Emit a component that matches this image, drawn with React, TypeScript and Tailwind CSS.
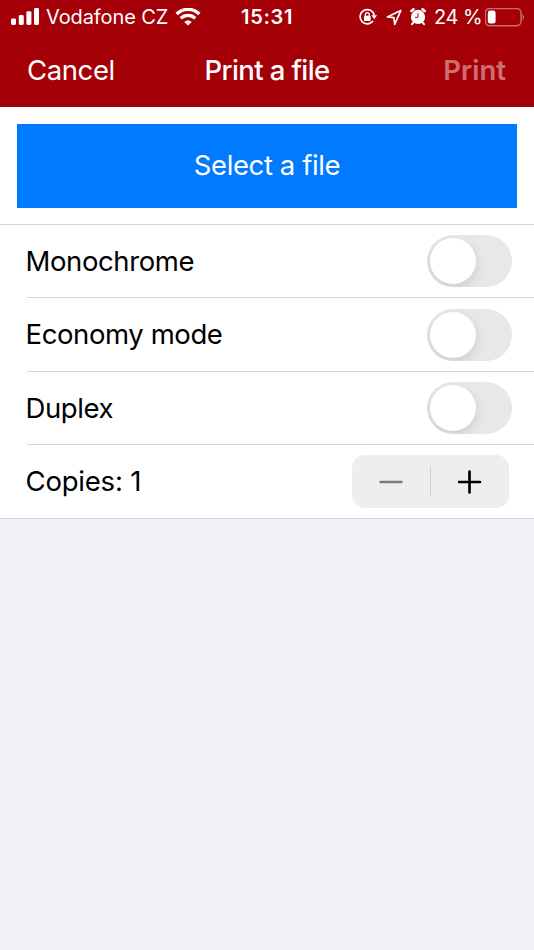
import React, { useState } from 'react';

const options = ['Monochrome', 'Economy mode', 'Duplex'];

function SignalIcon() {
    return (
        <svg width="28" height="18" viewBox="0 0 28 18" fill="white">
            <rect x="0" y="10.4" width="5" height="6.5" rx="1.4" />
            <rect x="7.8" y="7" width="5" height="9.9" rx="1.4" />
            <rect x="15.4" y="3.2" width="5" height="13.7" rx="1.4" />
            <rect x="23" y="0" width="5" height="16.9" rx="1.4" />
        </svg>
    );
}

function WifiIcon() {
    return (
        <svg width="26" height="18" viewBox="0 0 26 18" fill="none" stroke="white" strokeWidth="3.3">
            <path d="M1.6 6C8 -0.3 18 -0.3 24.4 6" />
            <path d="M5.7 10.4C9.8 6.4 16.2 6.4 20.3 10.4" />
            <path d="M13 17.6L9.2 14C11.3 11.9 14.7 11.9 16.8 14Z" fill="white" stroke="none" />
        </svg>
    );
}

function RotationLockIcon() {
    return (
        <svg width="18" height="18" viewBox="0 0 18 18" fill="none" stroke="white">
            <path d="M15.2 7.2A7.1 7.1 0 1 0 13.9 13" strokeWidth="1.7" />
            <path d="M12.4 7.2H18L15.3 11.2Z" fill="white" stroke="none" />
            <rect x="5" y="7.8" width="6.6" height="5.1" rx="0.7" fill="white" stroke="none" />
            <path d="M6.4 8.3V6.6A1.9 1.9 0 0 1 10.2 6.6V8.3" strokeWidth="1.3" />
        </svg>
    );
}

function LocationIcon() {
    return (
        <svg width="17" height="17" viewBox="0 0 17 17" fill="none" stroke="white" strokeWidth="1.7" strokeLinejoin="round">
            <path d="M14.8 1.6L1.4 7.9L7.9 8.6L8.7 15.3Z" />
        </svg>
    );
}

function AlarmIcon() {
    return (
        <svg width="17" height="18" viewBox="0 0 17 18" fill="none" stroke="white" strokeLinecap="round">
            <circle cx="8" cy="8.9" r="7.1" fill="white" stroke="none" />
            <path d="M1.3 3L3.5 1.2M14.7 3L12.5 1.2" strokeWidth="2.4" />
            <path d="M3.3 14.6L2 16.2M12.7 14.6L14 16.2" strokeWidth="2" />
            <path d="M8 5.6V9.3H5.4" stroke="#a50007" strokeWidth="1" />
        </svg>
    );
}

function BatteryIcon() {
    return (
        <svg width="40" height="19" viewBox="0 0 40 19">
            <rect x="0.3" y="0.4" width="35.8" height="17.4" rx="4.8" fill="none" stroke="white" strokeOpacity="0.42" strokeWidth="1.5" />
            <rect x="2.8" y="2.6" width="7.8" height="13" rx="2.4" fill="white" />
            <path d="M37.6 6.2C39.4 7.4 39.4 11 37.6 12.2Z" fill="white" fillOpacity="0.5" />
        </svg>
    );
}

function StatusBar() {
    return (
        <div className="flex h-[34px] items-center pl-[11px] pr-[9px]">
            <div className="flex w-[230px] items-center">
                <SignalIcon />
                <span className="ml-[7px] w-[129px] text-[20px] tracking-[-0.1px]">Vodafone CZ</span>
                <WifiIcon />
            </div>
            <span className="text-[20px] font-semibold tracking-[0.7px]">15:31</span>
            <div className="ml-auto flex items-center">
                <RotationLockIcon />
                <span className="ml-[9px]">
                    <LocationIcon />
                </span>
                <span className="ml-[7px]">
                    <AlarmIcon />
                </span>
                <span className="ml-[7px] w-[51px] text-[20px] tracking-[-0.5px]">24 %</span>
                <BatteryIcon />
            </div>
        </div>
    );
}

function Toggle({ on, onClick }: { on: boolean; onClick: () => void }) {
    return (
        <button
            role="switch"
            aria-checked={on}
            onClick={onClick}
            className={`flex h-[52px] w-[85px] items-center overflow-hidden rounded-full px-[3px] ${on ? 'justify-end bg-[#34c759]' : 'justify-start bg-[#e8e8ea]'}`}
        >
            <span className="size-[46px] rounded-full bg-white shadow-[0_4px_12px_rgba(0,0,0,0.13)]" />
        </button>
    );
}

export default function App() {
    const [enabled, setEnabled] = useState<Record<string, boolean>>({});
    const [copies, setCopies] = useState(1);

    return (
        <div className="flex h-[950px] w-[534px] flex-col overflow-hidden whitespace-nowrap bg-[#f2f1f7] font-['Inter',sans-serif] text-[27.5px] tracking-[-0.4px] text-black">
            {/* Header */}
            <header className="h-[107px] bg-[#a50007] text-white">
                <StatusBar />
                <nav className="grid h-[73px] grid-cols-[1fr_auto_1fr] items-center px-[27px]">
                    <button className="justify-self-start">Cancel</button>
                    <h1 className="font-medium tracking-[-0.6px]">Print a file</h1>
                    <button className="justify-self-end pr-px font-semibold tracking-[0px] text-white/45">Print</button>
                </nav>
            </header>

            <main className="border-b border-[#d4d4d8] bg-white">
                <div className="h-[118px] border-b border-[#d4d4d6] px-[17px] pt-[17px]">
                    <button className="h-[84px] w-full bg-[#007aff] text-white">Select a file</button>
                </div>

                {/* Print options */}
                {options.map((name) => (
                    <div key={name} className="pl-[27px]">
                        <div className="flex h-[73.4px] items-center justify-between border-b border-[#d4d4d6] pr-[22px]">
                            <span className="-ml-[1.5px] pt-px">{name}</span>
                            <Toggle on={!!enabled[name]} onClick={() => setEnabled({ ...enabled, [name]: !enabled[name] })} />
                        </div>
                    </div>
                ))}

                <div className="flex h-[72.8px] items-center justify-between pl-[25.5px] pr-[25px]">
                    <span className="pt-px tracking-[-0.2px]">Copies: {copies}</span>
                    <div className="flex h-[53px] w-[157px] items-center rounded-[13px] bg-[#eeeeef]">
                        <button className="flex flex-1 justify-center" aria-label="Fewer copies" onClick={() => setCopies(Math.max(1, copies - 1))}>
                            <svg width="24" height="24" viewBox="0 0 24 24" stroke="#7c7c7d" strokeWidth="2.4" strokeLinecap="round">
                                <path d="M1.5 12H22.5" />
                            </svg>
                        </button>
                        <span className="h-[30px] w-px bg-[#d0d0d2]" />
                        <button className="flex flex-1 justify-center" aria-label="More copies" onClick={() => setCopies(copies + 1)}>
                            <svg width="24" height="24" viewBox="0 0 24 24" stroke="black" strokeWidth="2.7" strokeLinecap="round">
                                <path d="M1 12H22M11.5 1.5V22.5" />
                            </svg>
                        </button>
                    </div>
                </div>
            </main>
        </div>
    );
}
